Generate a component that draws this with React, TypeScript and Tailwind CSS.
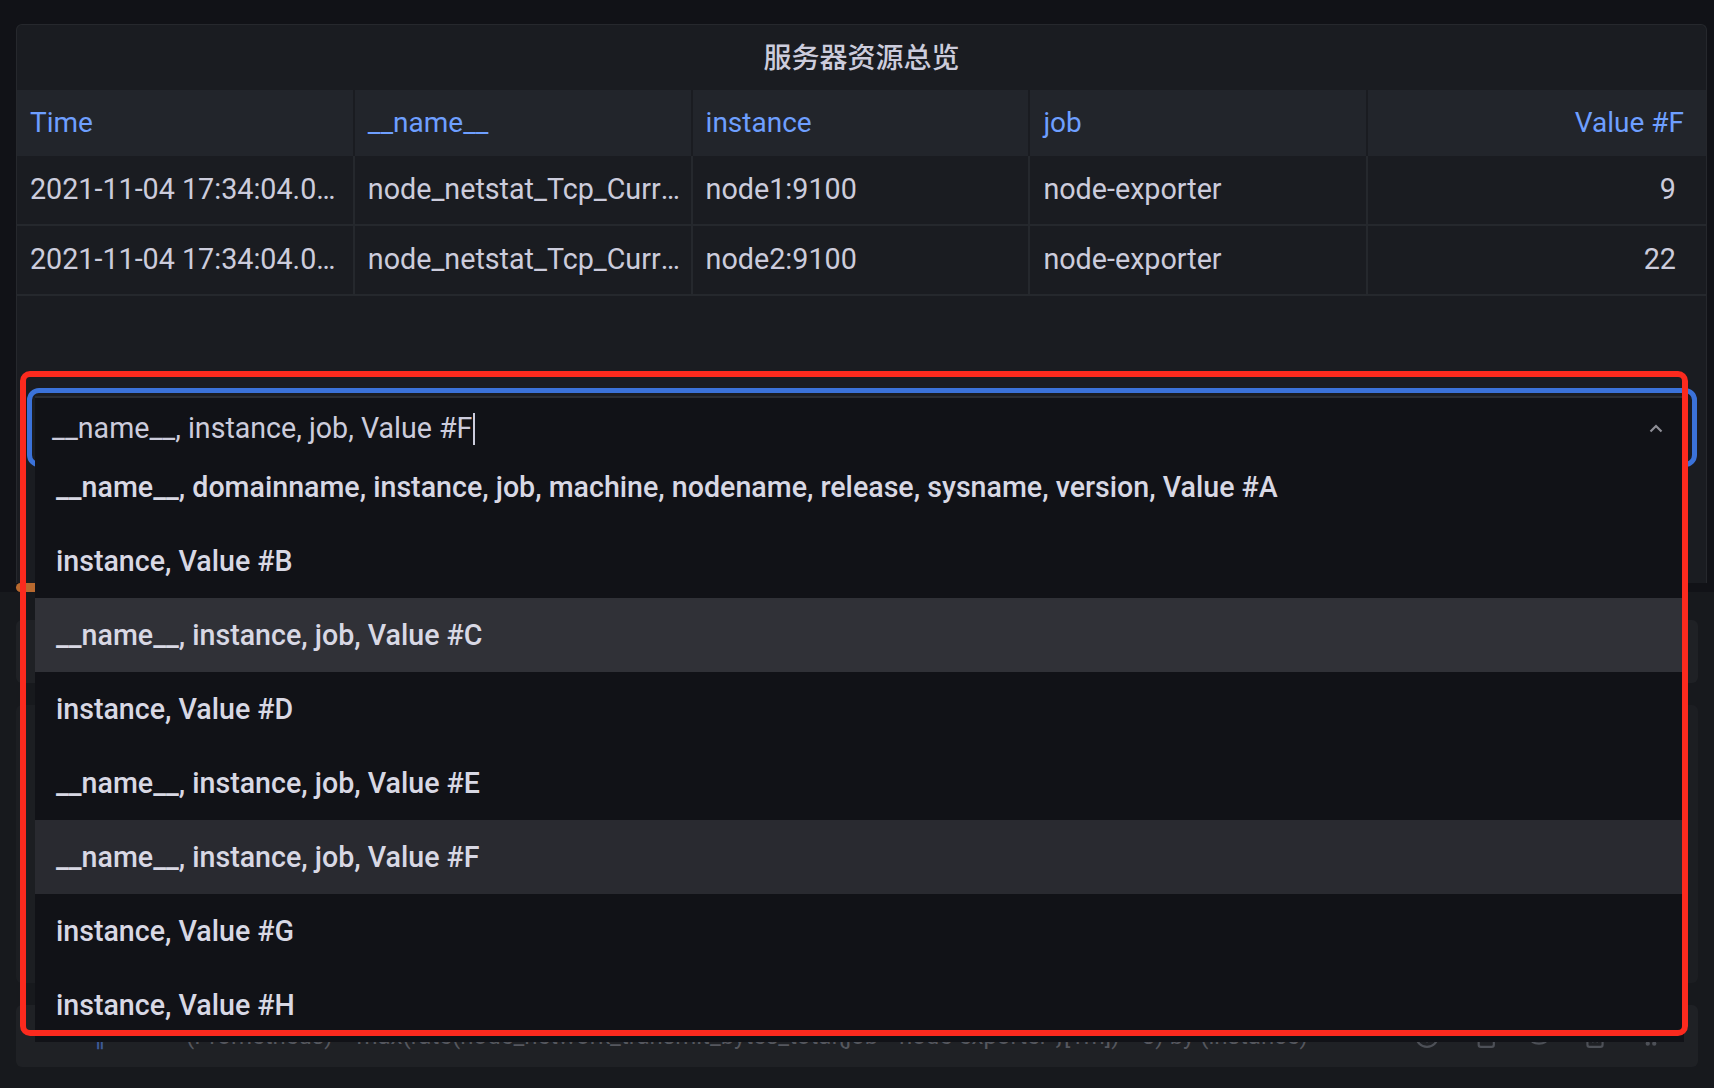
import { HelpCircle, Copy, Eye, Trash2, GripVertical } from "lucide-react";

const columns = ["Time", "__name__", "instance", "job", "Value #F"];

const rows = [
  ["2021-11-04 17:34:04.000", "node_netstat_Tcp_CurrEstab", "node1:9100", "node-exporter", "9"],
  ["2021-11-04 17:34:04.000", "node_netstat_Tcp_CurrEstab", "node2:9100", "node-exporter", "22"],
];

const options = [
  "__name__, domainname, instance, job, machine, nodename, release, sysname, version, Value #A",
  "instance, Value #B",
  "__name__, instance, job, Value #C",
  "instance, Value #D",
  "__name__, instance, job, Value #E",
  "__name__, instance, job, Value #F",
  "instance, Value #G",
  "instance, Value #H",
];

const TablePanel = () => (
  <section className="h-[559px] rounded-t-md border border-b-0 border-[#26282d] bg-[#1a1c21] flex flex-col overflow-hidden">
    <h2 className="h-[65px] shrink-0 flex items-center justify-center pb-[3px] text-[28px] font-medium text-[#ccccdc] font-['Noto_Sans_CJK_SC',sans-serif]">
      服务器资源总览
    </h2>
    <div className="grid grid-cols-5 h-[66px] bg-[#22252b]">
      {columns.map((c, i) => (
        <div
          key={c}
          className={`flex items-center px-[13px] text-[28px] text-[#6e9fff] ${i < 4 ? "border-r-2 border-[#1a1c21]" : "justify-end pr-[22px]"}`}
        >
          {c}
        </div>
      ))}
    </div>
    {rows.map((r, ri) => (
      <div key={ri} className="grid grid-cols-5 h-[70px] border-b-2 border-[#25282d]">
        {r.map((v, i) => (
          <div
            key={i}
            className={`flex items-center min-w-0 overflow-hidden pl-[13px] text-[28.7px] text-[#ccccdc] ${i < 4 ? "pr-[7px] border-r-2 border-[#25282d]" : "justify-end pr-[30px]"}`}
          >
            <span className={`block truncate ${i < 4 ? "w-full" : ""}`}>{v}</span>
          </div>
        ))}
      </div>
    ))}
  </section>
);

const QueryArea = () => (
  <div className="flex-1 bg-[#17191d] px-4 pt-[28px] flex flex-col gap-[22px]">
    <div className="h-[63px] rounded-md bg-[#1f2125]" />
    <div className="flex-1 rounded-md bg-[#1c1e22]" />
    <div className="h-[62px] mb-[21px] rounded-md bg-[#1f2125] flex items-center pl-[78px] pr-[34px] text-[24px] text-[#55575e]">
      <span className="text-[#3d5a99] mr-[80px]">∥</span>
      <span className="mr-6">(Prometheus)</span>
      <span className="flex-1 truncate">max(rate(node_network_transmit_bytes_total{"{"}job="node-exporter"{"}"}[1m]) * 8) by (instance)</span>
      <div className="flex items-center gap-[30px] text-[#4d5057]">
        <HelpCircle size={26} />
        <Copy size={26} />
        <Eye size={26} />
        <Trash2 size={26} />
        <GripVertical size={26} />
      </div>
    </div>
  </div>
);

const Dropdown = () => (
  <div className="absolute left-[35px] top-[396px] w-[1649px] bg-[#111217] border-t-2 border-[#2a2c31] font-['Roboto',sans-serif]">
    <div className="h-[52px] flex items-center pt-[9px] pl-[17px] pr-[21px]">
      <span className="text-[28.6px] text-[#ccccdc]">__name__, instance, job, Value #F</span>
      <span className="ml-[1px] w-[2px] h-[32px] bg-[#ccccdc]" />
      <svg className="ml-auto" width="14" height="9" viewBox="0 0 14 9" fill="none">
        <path d="M1.5 7.5L7 2l5.5 5.5" stroke="#8e8e96" strokeWidth="2.2" />
      </svg>
    </div>
    <ul>
      {options.map((o, i) => (
        <li
          key={o}
          className={`h-[74px] flex items-center pl-[21px] text-[28.6px] font-medium text-[#d8d8e4] ${i === 2 ? "bg-[#303137]" : i === 5 ? "bg-[#292a30]" : ""}`}
        >
          {o}
        </li>
      ))}
    </ul>
  </div>
);

export default function App() {
  return (
    <div className="relative w-[1714px] h-[1088px] overflow-hidden bg-[#111217] font-['Roboto',sans-serif]">
      <div className="flex flex-col h-full">
        <div className="pt-6 pl-4 pr-[7px]">
          <TablePanel />
        </div>
        <div className="h-[9px] pl-4 flex items-center">
          <div className="w-[40px] h-[9px] rounded-l-full bg-[#b8692f]" />
        </div>
        <QueryArea />
      </div>

      {/* focus ring of the select */}
      <div className="absolute left-[27px] top-[388px] w-[1670px] h-[79px] rounded-[12px] border-[5px] border-[#3b72d9]" />
      <Dropdown />
      {/* red annotation box */}
      <div className="absolute left-[20px] top-[371px] w-[1668px] h-[665px] rounded-[10px] border-[6px] border-[#fb2a1e]" />
    </div>
  );
}
